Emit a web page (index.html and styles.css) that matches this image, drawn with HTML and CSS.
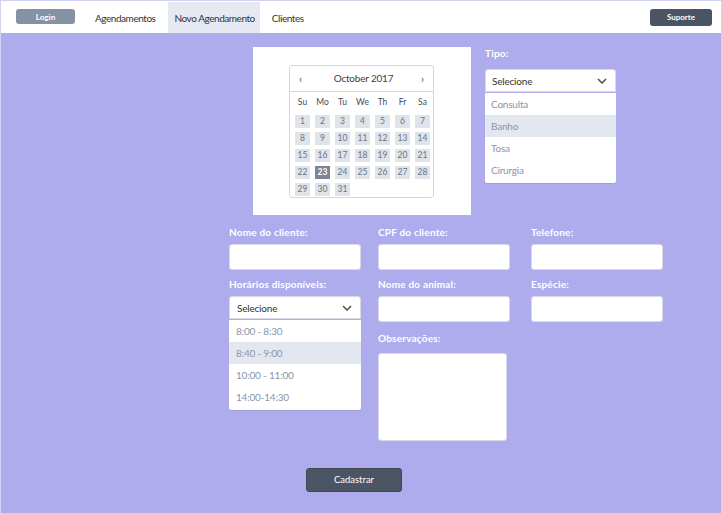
FILE: index.html
```html
<!DOCTYPE html>
<html lang="pt-BR">
<head>
<meta charset="utf-8">
<title>Novo Agendamento</title>
<link rel="stylesheet" href="styles.css">
</head>
<body>
<div class="page">
  <header class="navbar">
    <button class="btn btn-login">Login</button>
    <nav class="nav-links">
      <a class="nav-link">Agendamentos</a>
      <a class="nav-link active">Novo Agendamento</a>
      <a class="nav-link">Clientes</a>
    </nav>
    <button class="btn btn-support">Suporte</button>
  </header>

  <main class="content">
    <section class="top">
      <div class="cal-panel">
        <div class="calendar">
          <div class="cal-head">
            <span class="cal-arrow">&#8249;</span>
            <span class="cal-title">October 2017</span>
            <span class="cal-arrow">&#8250;</span>
          </div>
          <div class="cal-grid">
            <span class="dow">Su</span><span class="dow">Mo</span><span class="dow">Tu</span><span class="dow">We</span><span class="dow">Th</span><span class="dow">Fr</span><span class="dow">Sa</span>
            <span class="day">1</span><span class="day">2</span><span class="day">3</span><span class="day">4</span><span class="day">5</span><span class="day">6</span><span class="day">7</span>
            <span class="day">8</span><span class="day">9</span><span class="day">10</span><span class="day">11</span><span class="day">12</span><span class="day">13</span><span class="day">14</span>
            <span class="day">15</span><span class="day">16</span><span class="day">17</span><span class="day">18</span><span class="day">19</span><span class="day">20</span><span class="day">21</span>
            <span class="day">22</span><span class="day selected">23</span><span class="day">24</span><span class="day">25</span><span class="day">26</span><span class="day">27</span><span class="day">28</span>
            <span class="day">29</span><span class="day">30</span><span class="day">31</span>
          </div>
        </div>
      </div>
      <div class="tipo">
        <label class="label">Tipo:</label>
        <div class="select">
          <span>Selecione</span>
          <svg class="chev" width="10" height="6" viewBox="0 0 10 6"><path d="M1 1 L5 5 L9 1" fill="none" stroke="#555" stroke-width="1.6"/></svg>
        </div>
        <ul class="dropdown">
          <li>Consulta</li>
          <li class="hl">Banho</li>
          <li>Tosa</li>
          <li>Cirurgia</li>
        </ul>
      </div>
    </section>

    <form class="form">
      <div class="col col1">
        <label class="label">Nome do cliente:</label>
        <div class="input"></div>
        <label class="label">Horários disponíveis:</label>
        <div class="select select-sm">
          <span>Selecione</span>
          <svg class="chev" width="10" height="6" viewBox="0 0 10 6"><path d="M1 1 L5 5 L9 1" fill="none" stroke="#555" stroke-width="1.6"/></svg>
        </div>
        <ul class="dropdown dropdown-sm">
          <li>8:00 - 8:30</li>
          <li class="hl">8:40 - 9:00</li>
          <li>10:00 - 11:00</li>
          <li>14:00-14:30</li>
        </ul>
      </div>
      <div class="col col2">
        <label class="label">CPF do cliente:</label>
        <div class="input"></div>
        <label class="label">Nome do animal:</label>
        <div class="input"></div>
        <label class="label label-obs">Observações:</label>
        <div class="textarea"></div>
      </div>
      <div class="col col3">
        <label class="label">Telefone:</label>
        <div class="input"></div>
        <label class="label">Espécie:</label>
        <div class="input"></div>
      </div>
    </form>

    <div class="actions">
      <button class="btn btn-submit">Cadastrar</button>
    </div>
  </main>
</div>
</body>
</html>
```
FILE: styles.css
```css
* { box-sizing: border-box; }
html, body { margin: 0; padding: 0; }
body {
  font-family: Lato, "Open Sans", "Liberation Sans", sans-serif;
  color: #333;
}
.page {
  width: 722px;
  height: 514px;
  border: 1px solid #d3d2f2;
  background: #afaced;
  overflow: hidden;
  display: flex;
  flex-direction: column;
}
.navbar {
  height: 32px;
  background: #fff;
  display: flex;
  align-items: center;
  padding: 0 9px 0 15px;
  flex: none;
}
.btn {
  font-family: inherit;
  border: none;
  color: #fff;
  border-radius: 3px;
  cursor: pointer;
}
.btn-login {
  width: 59px;
  height: 15px;
  background: #8592a6;
  font-size: 8px;
  font-weight: 700;
  padding: 0;
  margin-top: -1px;
}
.nav-links {
  display: flex;
  align-self: stretch;
  margin-left: 8px;
  padding-top: 1px;
}
.nav-link {
  display: flex;
  align-items: center;
  padding: 0 12px;
  font-size: 10px;
  letter-spacing: -0.45px;
  color: #333;
}
.active { background: #e6e9f2; padding: 0 5px 0 7px; }
.nav-link:last-child { padding-left: 12px; }
.btn-support {
  margin-left: auto;
  width: 62px;
  height: 17px;
  background: #4b5462;
  font-size: 8px;
  font-weight: 700;
  padding: 0;
}

.content { flex: 1; padding-top: 14px; }
.top {
  display: flex;
  margin-left: 252px;
  gap: 14px;
}
.cal-panel {
  width: 218px;
  height: 168px;
  background: #fff;
  padding: 18px 0 0 36px;
}
.calendar {
  width: 145px;
  height: 133px;
  border: 1px solid #d3d7df;
  border-radius: 3px;
}
.cal-head {
  height: 26px;
  border-bottom: 1px solid #d3d7df;
  display: flex;
  align-items: center;
  justify-content: space-between;
  padding: 0 9px 1px 9px;
  font-size: 10px;
  color: #3a3f48;
}
.cal-arrow { font-size: 11px; color: #555; }
.cal-title { margin-left: 4px; letter-spacing: -0.2px; }
.cal-grid {
  display: grid;
  grid-template-columns: repeat(7, 15px);
  grid-template-rows: 17px repeat(5, 13px);
  column-gap: 5px;
  row-gap: 4px;
  padding: 2px 0 0 5px;
}
.dow {
  font-size: 8.5px;
  color: #444a55;
  text-align: center;
  line-height: 17px;
  margin-bottom: -1px;
}
.day {
  background: #dfe3ea;
  font-size: 8.5px;
  color: #6d7482;
  text-align: center;
  line-height: 13px;
}
.day.selected { background: #7c8594; color: #fff; font-weight: 700; }

.tipo { width: 132px; padding-top: 0; }
.label {
  display: block;
  font-size: 10px;
  font-weight: 700;
  letter-spacing: 0.2px;
  color: #fff;
  line-height: 12px;
  margin-bottom: 6px;
}
.tipo .label { margin-bottom: 10px; }
.select {
  height: 23px;
  background: #fff;
  border-radius: 3px 3px 0 0;
  border: 1px solid #d8d9e6;
  display: flex;
  align-items: center;
  justify-content: space-between;
  padding: 0 8px 0 6px;
  font-size: 10px;
  letter-spacing: -0.2px;
  color: #333;
  width: 131px;
}
.chev { margin-top: 1px; }
.dropdown {
  list-style: none;
  margin: 1px 0 0;
  padding: 0 0 2px;
  background: #fff;
  width: 131px;
  border-radius: 0 0 2px 2px;
  box-shadow: 0 1px 1px rgba(0,0,0,0.08);
}
.dropdown li {
  height: 22px;
  line-height: 22px;
  padding-left: 6px;
  font-size: 10px;
  letter-spacing: -0.2px;
  color: #8c95a6;
}
.dropdown li.hl { background: #e3e7f0; }

.form {
  display: grid;
  grid-template-columns: 149px 153px 132px;
  margin: 11px 0 0 228px;
}
.col { display: flex; flex-direction: column; }
.input {
  width: 132px;
  height: 26px;
  background: #fff;
  border: 1px solid #d8d9e6;
  border-radius: 3px;
  margin-bottom: 8px;
}
.select-sm { width: 132px; padding-left: 7px; }
.dropdown-sm { width: 132px; }
.dropdown-sm li { padding-left: 7px; }
.label-obs { margin-top: 2px; margin-bottom: 9px; }
.textarea {
  width: 129px;
  height: 88px;
  background: #fff;
  border: 1px solid #d8d9e6;
  border-radius: 3px;
}
.actions { margin: 26px 0 0 305px; }
.btn-submit {
  width: 96px;
  height: 24px;
  background: #4b5563;
  font-size: 9.5px;
  padding: 0;
  border: 1px solid #3f4854;
}
```
